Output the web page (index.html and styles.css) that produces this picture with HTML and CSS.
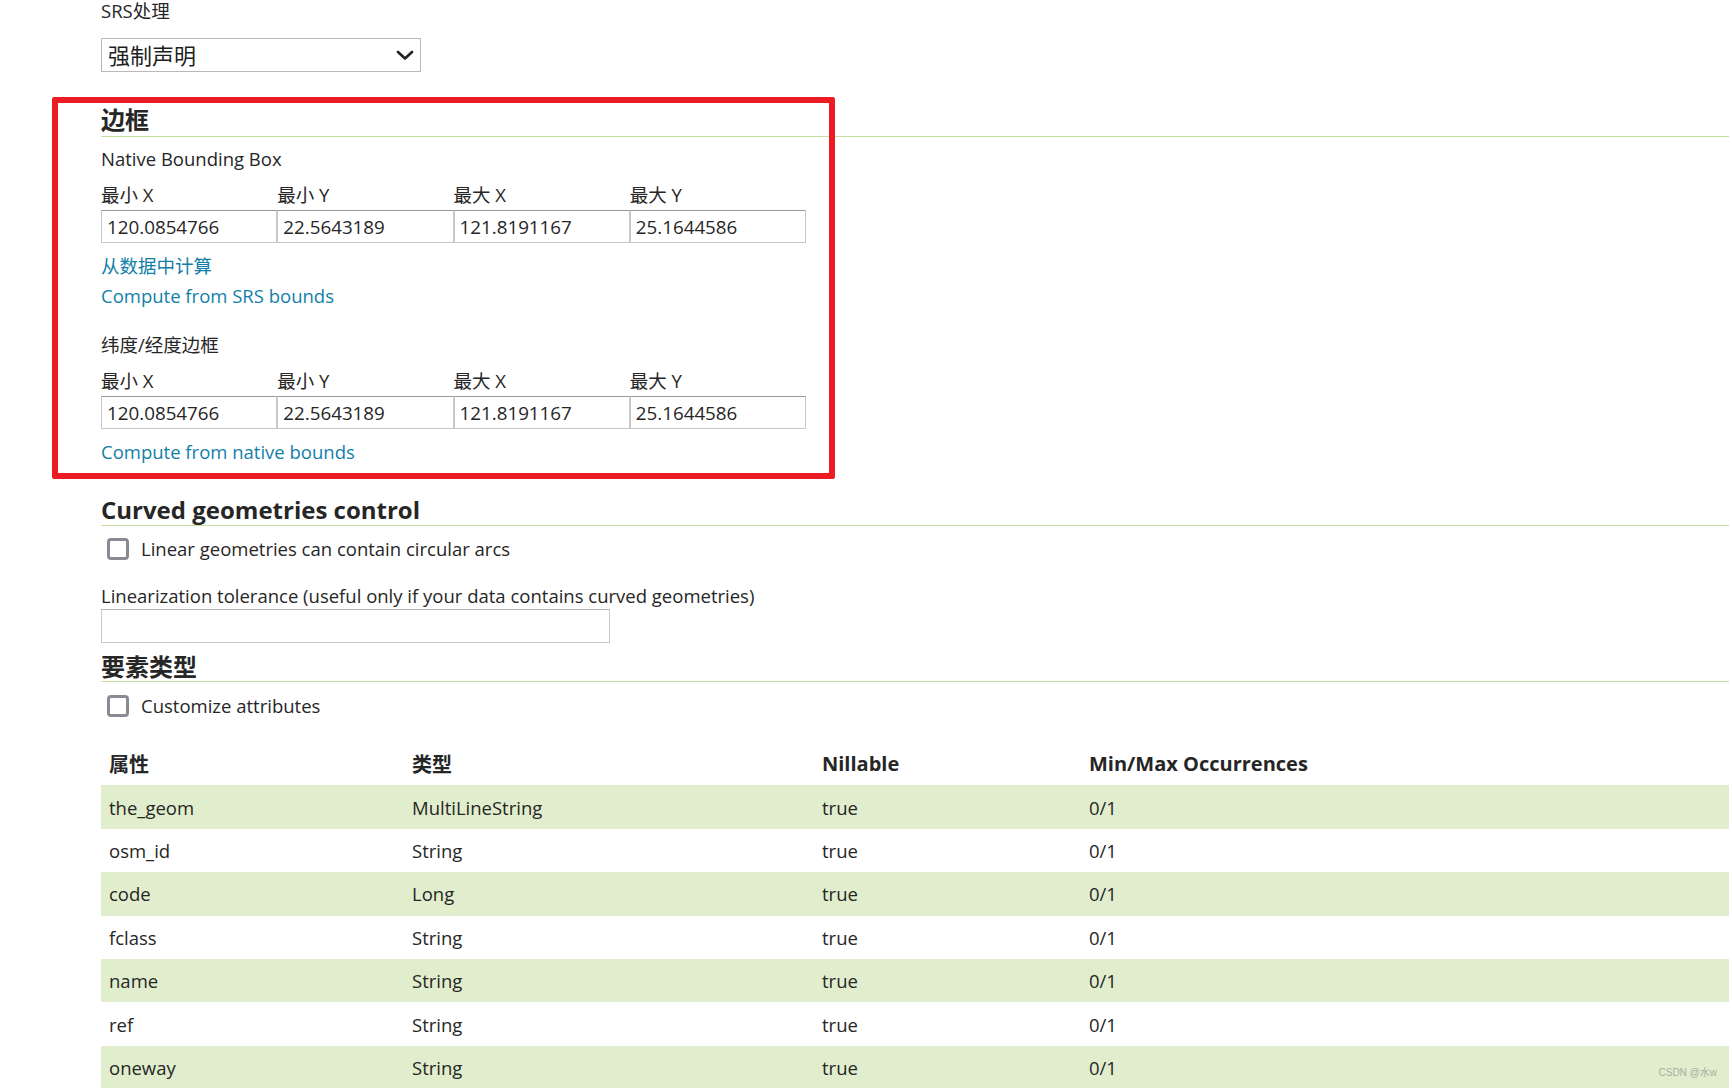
FILE: index.html
```html
<!DOCTYPE html>
<html lang="zh-CN">
<head>
<meta charset="utf-8">
<title>图层编辑</title>
<link rel="stylesheet" href="styles.css">
</head>
<body>
<div class="page">
  <div class="label">SRS处理</div>
  <div class="select-wrap">
    <select class="select"><option>强制声明</option></select>
    <svg class="chev" width="18" height="10" viewBox="0 0 18 10"><polyline points="2,2 9,8.5 16,2" fill="none" stroke="#222" stroke-width="2.6" stroke-linecap="round" stroke-linejoin="round"/></svg>
  </div>

  <h3 class="section s-bbox">边框</h3>
  <div class="sub s-native">Native Bounding Box</div>
  <div class="bbox-labels"><span>最小 X</span><span>最小 Y</span><span>最大 X</span><span>最大 Y</span></div>
  <div class="bbox-inputs">
    <input class="num" value="120.0854766"><input class="num" value="22.5643189"><input class="num" value="121.8191167"><input class="num" value="25.1644586">
  </div>
  <a class="link l-data" href="#">从数据中计算</a>
  <a class="link l-srs" href="#">Compute from SRS bounds</a>
  <div class="sub s-latlon">纬度/经度边框</div>
  <div class="bbox-labels"><span>最小 X</span><span>最小 Y</span><span>最大 X</span><span>最大 Y</span></div>
  <div class="bbox-inputs">
    <input class="num" value="120.0854766"><input class="num" value="22.5643189"><input class="num" value="121.8191167"><input class="num" value="25.1644586">
  </div>
  <a class="link l-native" href="#">Compute from native bounds</a>

  <h3 class="section s-curved">Curved geometries control</h3>
  <label class="check c-arcs"><input type="checkbox" class="box"><span>Linear geometries can contain circular arcs</span></label>
  <div class="sub s-tol">Linearization tolerance (useful only if your data contains curved geometries)</div>
  <input class="tol-input" value="">

  <h3 class="section s-ft">要素类型</h3>
  <label class="check c-custom"><input type="checkbox" class="box"><span>Customize attributes</span></label>

  <table class="attrs">
    <colgroup><col class="c1"><col class="c2"><col class="c3"><col class="c4"></colgroup>
    <thead>
      <tr><th>属性</th><th>类型</th><th>Nillable</th><th>Min/Max Occurrences</th></tr>
    </thead>
    <tbody>
      <tr class="odd"><td>the_geom</td><td>MultiLineString</td><td>true</td><td>0/1</td></tr>
      <tr><td>osm_id</td><td>String</td><td>true</td><td>0/1</td></tr>
      <tr class="odd"><td>code</td><td>Long</td><td>true</td><td>0/1</td></tr>
      <tr><td>fclass</td><td>String</td><td>true</td><td>0/1</td></tr>
      <tr class="odd"><td>name</td><td>String</td><td>true</td><td>0/1</td></tr>
      <tr><td>ref</td><td>String</td><td>true</td><td>0/1</td></tr>
      <tr class="odd"><td>oneway</td><td>String</td><td>true</td><td>0/1</td></tr>
    </tbody>
  </table>
</div>
<div class="annot"></div>
<div class="watermark">CSDN @水w</div>
</body>
</html>
```

FILE: styles.css
```css
html, body {
  margin: 0;
  padding: 0;
  background: #ffffff;
}
body {
  font-family: "Open Sans", "Noto Sans CJK SC", sans-serif;
  font-size: 18.5px;
  color: #262626;
  overflow: hidden;
  height: 1088px;
  position: relative;
}
.page {
  padding: 0 3px 0 101px;
}
.label {
  line-height: 22px;
  height: 22px;
}
.select-wrap {
  position: relative;
  margin-top: 16px;
  width: 320px;
  height: 34px;
}
.select {
  appearance: none;
  -webkit-appearance: none;
  box-sizing: border-box;
  width: 320px;
  height: 34px;
  margin: 0;
  border: 1px solid #b9b9b9;
  border-radius: 0;
  background: #fff;
  padding: 0 0 0 6px;
  font-family: "Open Sans", "Noto Sans CJK SC", sans-serif;
  font-size: 22px;
  color: #1e1e1e;
}
.chev {
  position: absolute;
  right: 7px;
  top: 12px;
}
.section {
  margin: 0;
  font-size: 24px;
  font-weight: 700;
  color: #262626;
  line-height: 30px;
  border-bottom: 1px solid #c4df9e;
}
.s-bbox { margin-top: 33px; padding-bottom: 1px; }
.sub {
  line-height: 24px;
}
.s-native { margin-top: 10px; }
.bbox-labels {
  display: grid;
  grid-template-columns: repeat(4, 1fr);
  width: 705px;
  line-height: 24px;
  margin-top: 12px;
}
.bbox-inputs {
  display: grid;
  grid-template-columns: repeat(4, 1fr);
  width: 705px;
  margin-top: 3px;
}
.num {
  box-sizing: border-box;
  width: 100%;
  height: 33px;
  margin: 0;
  border: 1px solid #c8c8c8;
  border-top-color: #999999;
  border-radius: 0;
  padding: 0 5px;
  font-family: "Open Sans", "Noto Sans CJK SC", sans-serif;
  font-size: 18.8px;
  color: #262626;
  background: #fff;
}
.link {
  display: block;
  color: #137fa9;
  text-decoration: none;
  line-height: 24px;
  width: max-content;
}
.l-data { margin-top: 11px; }
.l-srs { margin-top: 6px; }
.s-latlon { margin-top: 25px; }
.l-native { margin-top: 11px; }
.s-curved { margin-top: 31px; padding-bottom: 0; }
.check {
  display: flex;
  align-items: center;
  gap: 12px;
  line-height: 24px;
  padding-left: 6px;
}
.box {
  appearance: none;
  -webkit-appearance: none;
  box-sizing: border-box;
  width: 22px;
  height: 22px;
  margin: 0;
  border: 3px solid #8a8a94;
  border-radius: 4px;
  background: #fff;
}
.c-arcs { margin-top: 11px; }
.s-tol { margin-top: 23px; }
.tol-input {
  display: block;
  box-sizing: border-box;
  width: 509px;
  height: 34px;
  margin: 1px 0 0 0;
  border: 1px solid #c8c8c8;
  border-top-color: #b0b0b0;
  border-radius: 0;
  padding: 0 5px;
  background: #fff;
}
.s-ft { margin-top: 10px; line-height: 28px; }
.c-custom { margin-top: 12px; }
.attrs {
  width: 100%;
  border-collapse: collapse;
  margin-top: 24px;
  table-layout: fixed;
}
.c1 { width: 303px; }
.c2 { width: 410px; }
.c3 { width: 267px; }
.attrs th, .attrs td {
  text-align: left;
  padding: 0 0 0 8px;
  height: 43.4px;
  font-size: 18.5px;
}
.attrs th {
  font-size: 20px;
  font-weight: 700;
  color: #262626;
}
.attrs tr.odd td {
  background: #e1eecd;
}
.annot {
  position: absolute;
  left: 52px;
  top: 97px;
  width: 783px;
  height: 382px;
  box-sizing: border-box;
  border: 6px solid #ec1c24;
  border-radius: 2px;
  pointer-events: none;
}
.watermark {
  position: absolute;
  right: 15px;
  bottom: 9px;
  font-family: "Liberation Sans", "Noto Sans CJK SC", sans-serif;
  font-size: 10px;
  color: #a9ad9f;
}
```
